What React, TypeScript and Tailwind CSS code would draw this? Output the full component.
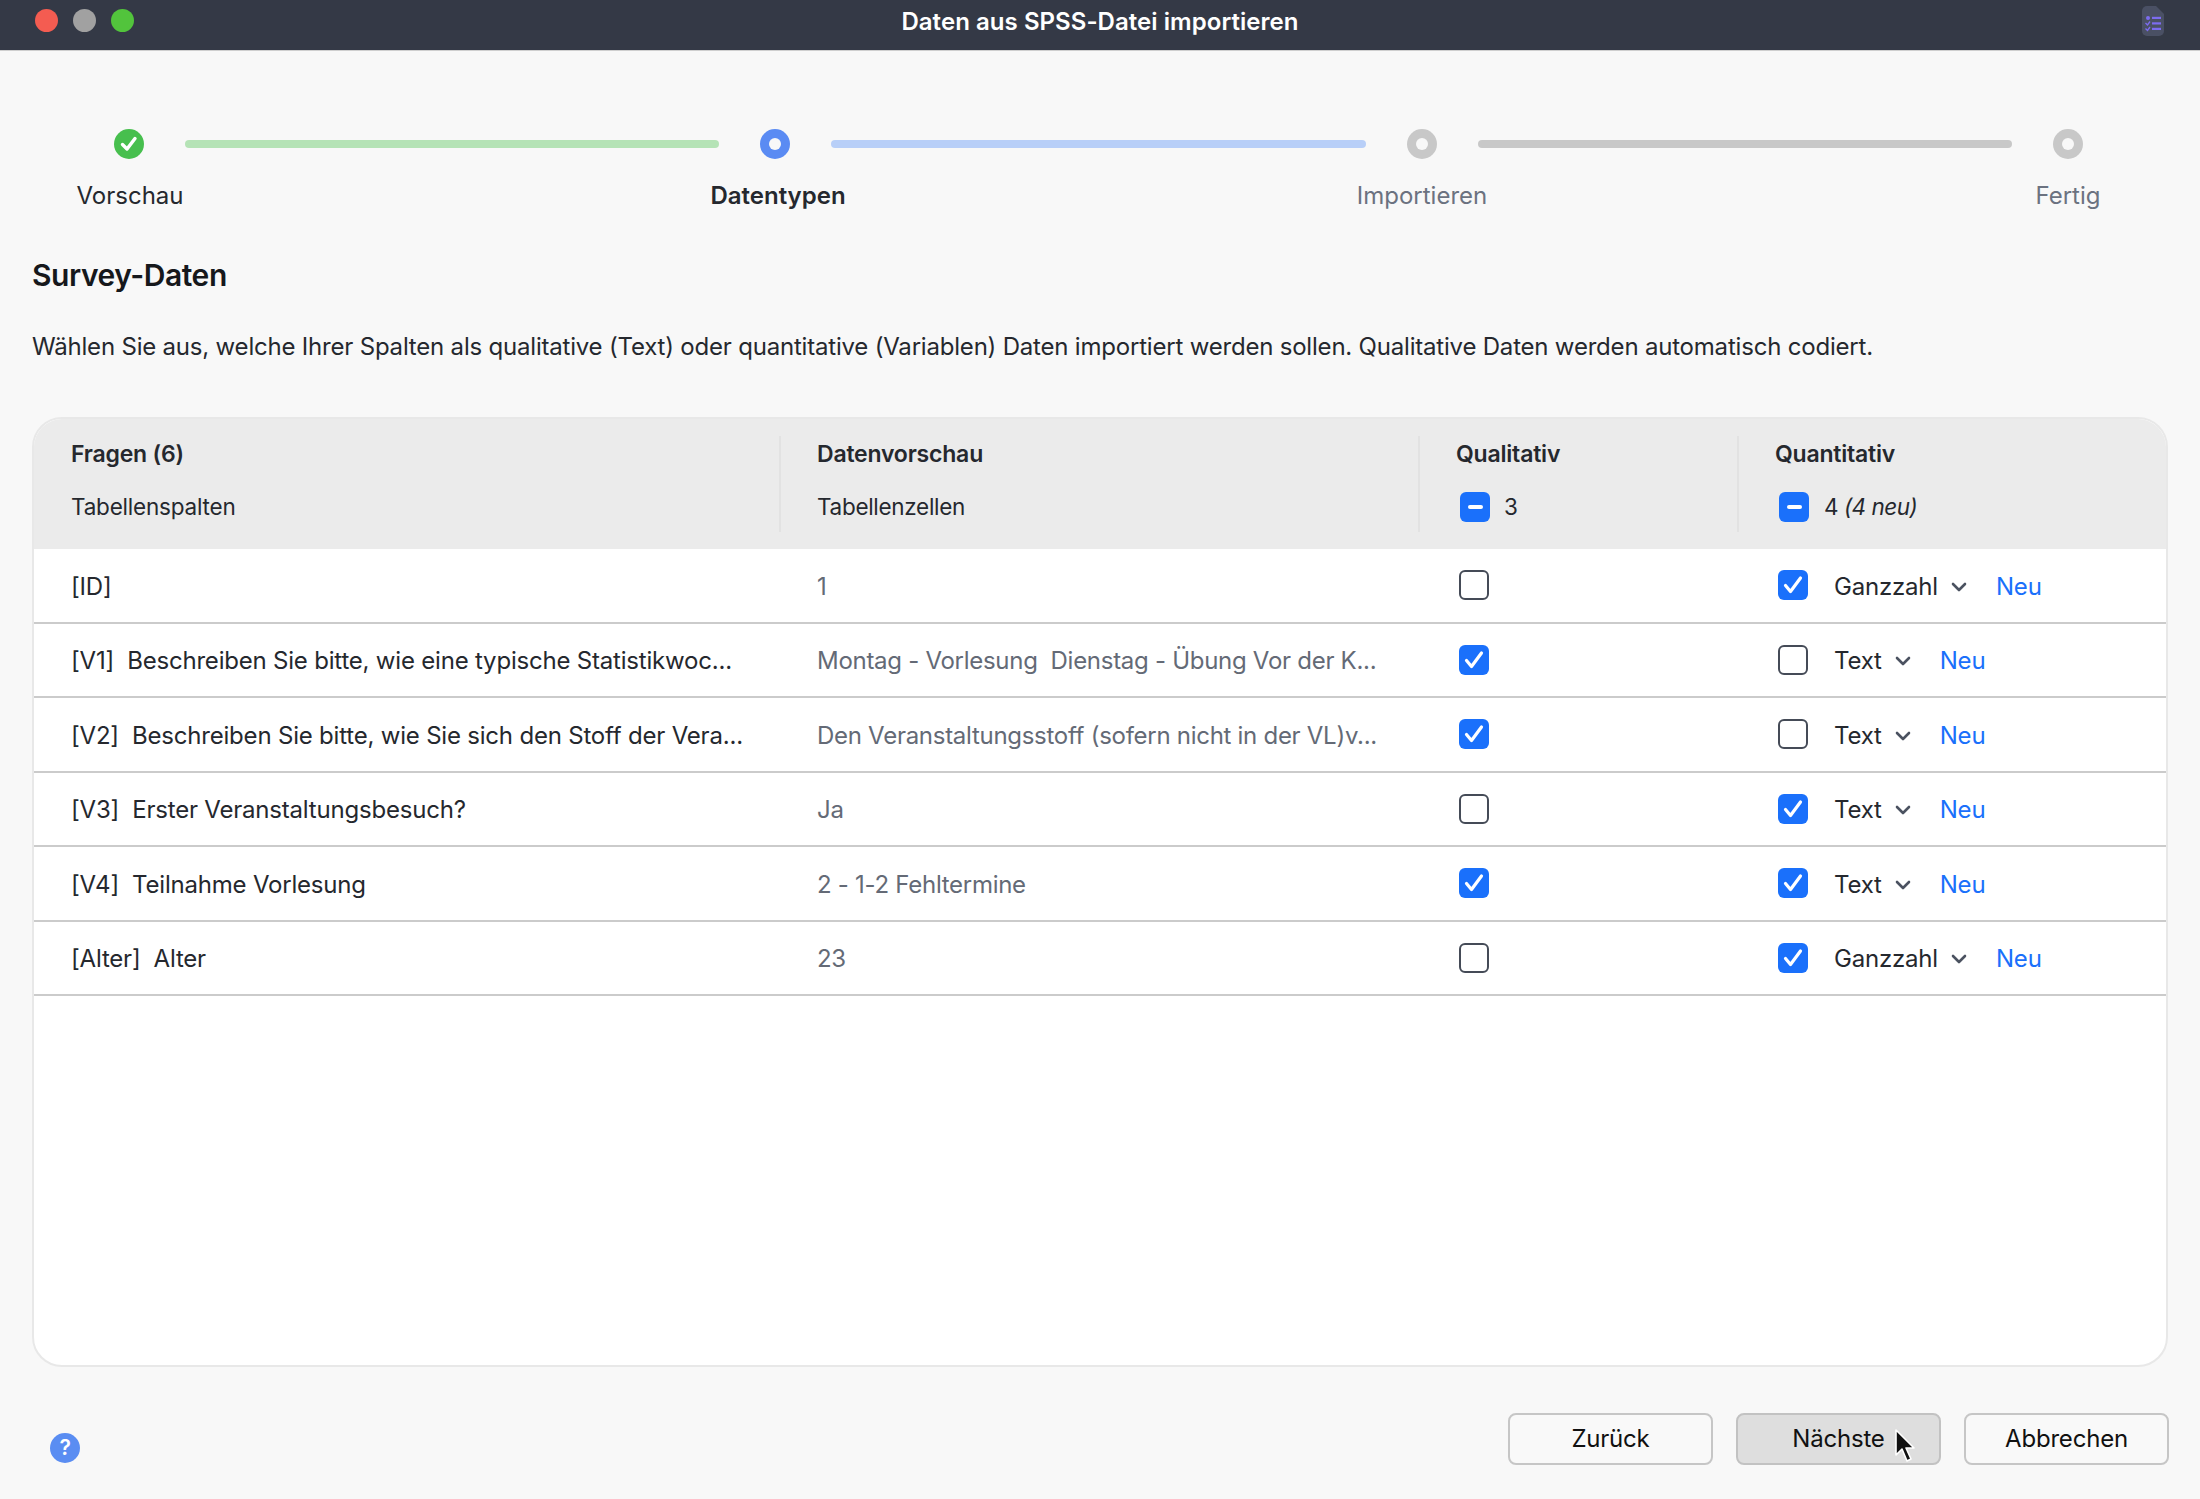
import React from "react";

function Box({ state }: { state: "on" | "off" | "mixed" }) {
  if (state === "off") {
    return <span className="block w-[30px] h-[30px] shrink-0 rounded-[6px] border-2 border-[#454b57] bg-white" />;
  }
  return (
    <span className="flex items-center justify-center w-[30px] h-[30px] shrink-0 rounded-[6px] bg-[#1a70fb]">
      {state === "on" ? (
        <svg viewBox="0 0 30 30" className="w-[30px] h-[30px]" fill="none" stroke="#fff" strokeWidth="3.2" strokeLinecap="round" strokeLinejoin="round">
          <path d="M7.5 15.5 L12.5 21.5 L22.5 8" />
        </svg>
      ) : (
        <span className="block w-[15px] h-[4px] rounded-full bg-white" />
      )}
    </span>
  );
}

function Chevron() {
  return (
    <svg viewBox="0 0 16 10" className="block w-[16px] h-[10px]" fill="none" stroke="#4b5260" strokeWidth="2.6" strokeLinecap="round" strokeLinejoin="round">
      <path d="M2 2 L8 8 L14 2" />
    </svg>
  );
}

function StepDot({ kind }: { kind: "done" | "active" | "todo" }) {
  if (kind === "done") {
    return (
      <span className="flex items-center justify-center w-[30px] h-[30px] shrink-0 rounded-full bg-[#47bf4e]">
        <svg viewBox="0 0 30 30" className="w-[30px] h-[30px]" fill="none" stroke="#fff" strokeWidth="3.4" strokeLinecap="round" strokeLinejoin="round">
          <path d="M8.5 15.5 L13 20 L21 9.5" />
        </svg>
      </span>
    );
  }
  const cls = kind === "active" ? "bg-[#5a8bf3]" : "bg-[#c8c8c8]";
  return (
    <span className={`flex items-center justify-center w-[30px] h-[30px] shrink-0 rounded-full ${cls}`}>
      <span className="block w-[12px] h-[12px] rounded-full bg-[#f8f8f8]" />
    </span>
  );
}

type Row = {
  tag: string;
  q: string;
  preview: string;
  qual: boolean;
  quant: boolean;
  type: string;
};

const rows: Row[] = [
  { tag: "[ID]", q: "", preview: "1", qual: false, quant: true, type: "Ganzzahl" },
  { tag: "[V1]", q: "Beschreiben Sie bitte, wie eine typische Statistikwoc...", preview: "Montag - Vorlesung  Dienstag - Übung Vor der K...", qual: true, quant: false, type: "Text" },
  { tag: "[V2]", q: "Beschreiben Sie bitte, wie Sie sich den Stoff der Vera...", preview: "Den Veranstaltungsstoff (sofern nicht in der VL)v...", qual: true, quant: false, type: "Text" },
  { tag: "[V3]", q: "Erster Veranstaltungsbesuch?", preview: "Ja", qual: false, quant: true, type: "Text" },
  { tag: "[V4]", q: "Teilnahme Vorlesung", preview: "2 - 1-2 Fehltermine", qual: true, quant: true, type: "Text" },
  { tag: "[Alter]", q: "Alter", preview: "23", qual: false, quant: true, type: "Ganzzahl" },
];

const cols = "grid grid-cols-[745px_639px_319px_1fr]";

export default function App() {
  return (
    <div className="w-[2200px] h-[1499px] flex flex-col bg-[#f8f8f8] overflow-hidden font-['Inter',sans-serif] text-[#25282e] text-[24px] tracking-[-0.2px]">
      {/* Title bar */}
      <div className="flex items-center h-[51px] shrink-0 bg-[#343946] border-b border-[#cfcfcf] px-[35px] pb-[10px]">
        <div className="flex-1 flex items-center gap-[15px]">
          <span className="block w-[23px] h-[23px] rounded-full bg-[#f45c51]" />
          <span className="block w-[23px] h-[23px] rounded-full bg-[#a1a1a1]" />
          <span className="block w-[23px] h-[23px] rounded-full bg-[#52c43c]" />
        </div>
        <div className="text-white font-semibold text-[24px] tracking-[0.05px] mt-[3px]">Daten aus SPSS-Datei importieren</div>
        <div className="flex-1 flex justify-end">
          <svg viewBox="0 0 22 30" className="w-[22px] h-[30px] mt-[1px] mr-[1px]">
            <path d="M5 0 H14 L22 8 V25 a5 5 0 0 1 -5 5 H5 a5 5 0 0 1 -5 -5 V5 a5 5 0 0 1 5 -5 Z" fill="#4a5064" />
            <g fill="#7c6cf0">
              <circle cx="6" cy="12" r="2" />
              <rect x="10" y="10.8" width="9" height="2.2" />
              <rect x="10" y="16.3" width="9" height="2.2" />
              <rect x="10" y="21.8" width="9" height="2.2" />
            </g>
            <g fill="none" stroke="#7c6cf0" strokeWidth="1.3">
              <path d="M3.5 17 L5.5 19 L8 15.5" />
              <path d="M3.5 22.5 L5.5 24.5 L8 21" />
            </g>
          </svg>
        </div>
      </div>

      {/* Stepper */}
      <div className="flex items-center pl-[114px] pr-[117px] mt-[78px] h-[30px] shrink-0">
        <StepDot kind="done" />
        <span className="flex-1 h-[8px] rounded-full bg-[#b5e3b6] mx-[41px]" />
        <StepDot kind="active" />
        <span className="flex-1 h-[8px] rounded-full bg-[#b8cff8] mx-[41px]" />
        <StepDot kind="todo" />
        <span className="flex-1 h-[8px] rounded-full bg-[#c8c8c8] mx-[41px]" />
        <StepDot kind="todo" />
      </div>
      <div className="flex mt-[19px] h-[36px] items-center pl-[30px] shrink-0 tracking-[0px]">
        <span className="w-[200px] text-center">Vorschau</span>
        <span className="w-[200px] text-center ml-[448px] font-semibold">Datentypen</span>
        <span className="w-[200px] text-center ml-[444px] text-[#6b7280]">Importieren</span>
        <span className="w-[200px] text-center ml-[446px] text-[#6b7280]">Fertig</span>
      </div>

      <h1 className="mt-[42px] ml-[32px] h-[38px] leading-[38px] text-[30px] font-semibold text-[#16181c] tracking-[-0.45px] shrink-0">Survey-Daten</h1>
      <p className="mt-[35px] ml-[32px] h-[36px] leading-[36px] shrink-0">
        Wählen Sie aus, welche Ihrer Spalten als qualitative (Text) oder quantitative (Variablen) Daten importiert werden sollen. Qualitative Daten werden automatisch codiert.
      </p>

      {/* Table */}
      <div className="mt-[52px] mx-[32px] h-[950px] shrink-0 rounded-[30px] bg-white border-2 border-[#e8e8e8] overflow-hidden">
        <div className={`${cols} h-[130px] bg-[#ebebeb] pt-[17px]`}>
          <div className="h-[96px] pl-[37px] flex flex-col gap-[17px]">
            <span className="font-semibold h-[36px] leading-[36px] text-[23px]">Fragen (6)</span>
            <span className="h-[36px] leading-[36px] text-[22.5px]">Tabellenspalten</span>
          </div>
          <div className="h-[96px] pl-[36px] border-l-2 border-[#e2e2e2] flex flex-col gap-[17px]">
            <span className="font-semibold h-[36px] leading-[36px] text-[23px]">Datenvorschau</span>
            <span className="h-[36px] leading-[36px] text-[22.5px] tracking-[-0.3px]">Tabellenzellen</span>
          </div>
          <div className="h-[96px] pl-[36px] border-l-2 border-[#e2e2e2] flex flex-col gap-[17px]">
            <span className="font-semibold h-[36px] leading-[36px] text-[23px]">Qualitativ</span>
            <span className="flex items-center gap-[14px] pl-[4px] h-[36px] text-[22.5px]"><Box state="mixed" />3</span>
          </div>
          <div className="h-[96px] pl-[36px] border-l-2 border-[#e2e2e2] flex flex-col gap-[17px]">
            <span className="font-semibold h-[36px] leading-[36px] text-[23px]">Quantitativ</span>
            <span className="flex items-center gap-[15px] pl-[4px] h-[36px] text-[22.5px] tracking-[-0.5px]"><Box state="mixed" /><span>4 <i>(4 neu)</i></span></span>
          </div>
        </div>
        {rows.map((r) => (
          <div key={r.tag} className={`${cols} h-[74.5px] items-center border-b-2 border-[#cbcbcb]`}>
            <div className="pl-[37px] mt-[3px] whitespace-pre">{r.tag}{r.q ? "  " + r.q : ""}</div>
            <div className="pl-[38px] mt-[3px] text-[#646a76] whitespace-pre tracking-[-0.28px]">{r.preview}</div>
            <div className="pl-[41px]"><Box state={r.qual ? "on" : "off"} /></div>
            <div className="pl-[41px] flex items-center">
              <Box state={r.quant ? "on" : "off"} />
              <span className="ml-[26px] mt-[3px]">{r.type}</span>
              <span className="ml-[13px] mt-[3px]"><Chevron /></span>
              <span className="ml-[29px] mt-[3px] text-[#1a70fb]">Neu</span>
            </div>
          </div>
        ))}
      </div>

      {/* Footer */}
      <div className="relative flex items-center mt-[46px] pl-[50px] pr-[31px]">
        <span className="flex items-center justify-center w-[30px] h-[30px] rounded-full bg-[#5a8df2] text-white font-semibold text-[21px] mt-[18px]">?</span>
        <div className="ml-auto flex gap-[23px]">
          <button className="w-[205px] h-[52px] rounded-[8px] border-2 border-[#c6c6c6] bg-[#f9f9f9] text-[#111]">Zurück</button>
          <button className="relative w-[205px] h-[52px] rounded-[8px] border-2 border-[#c2c2c2] bg-[#dedede] text-[#111]">
            Nächste
            <svg viewBox="0 0 22 34" className="absolute left-[156px] top-[14px] w-[22px] h-[34px]">
              <path d="M2 1 L2 26 L8 20 L13 32 L17 30 L12 19 L20 19 Z" fill="#111" stroke="#fff" strokeWidth="1.6" strokeLinejoin="round" />
            </svg>
          </button>
          <button className="w-[205px] h-[52px] rounded-[8px] border-2 border-[#c6c6c6] bg-[#f9f9f9] text-[#111]">Abbrechen</button>
        </div>
      </div>
    </div>
  );
}
